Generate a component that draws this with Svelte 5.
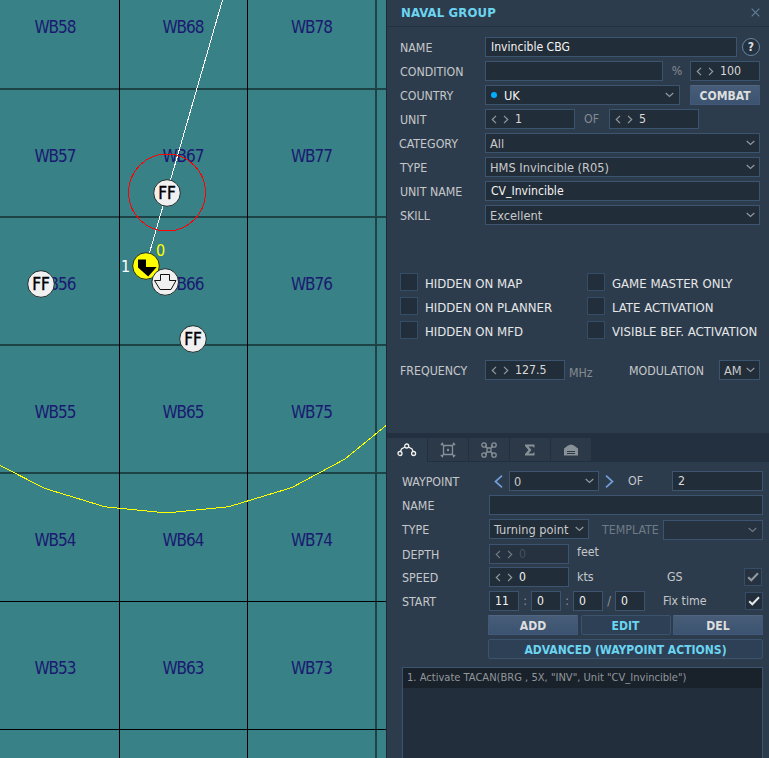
<script>
  const cols = [
    { id: 5, x: 55.5 },
    { id: 6, x: 183.5 },
    { id: 7, x: 312 }
  ];
  const rows = [
    { id: 8, y: 33 }, { id: 7, y: 161.500 }, { id: 6, y: 289.500 },
    { id: 5, y: 417.500 }, { id: 4, y: 546 }, { id: 3, y: 674 }
  ];
  const friendly = [{ x: 167, y: 193 }, { x: 41, y: 284 }, { x: 193, y: 339 }];
  const flags = [
    ['HIDDEN ON MAP', 'GAME MASTER ONLY'],
    ['HIDDEN ON PLANNER', 'LATE ACTIVATION'],
    ['HIDDEN ON MFD', 'VISIBLE BEF. ACTIVATION']
  ];
</script>

{#snippet down()}
  <svg class="down" width="9" height="6" viewBox="0 0 9 6"><path d="M.7 1 4.5 4.4 8.3 1" /></svg>
{/snippet}
{#snippet spin()}
  <svg class="spin" width="18" height="9" viewBox="0 0 18 9"><path d="M5 .8 1.3 4.5 5 8.2M13 .8l3.7 3.7L13 8.2" /></svg>
{/snippet}
{#snippet tick()}
  <svg width="12" height="10" viewBox="0 0 12 10"><path class="tick" d="M1.2 5.2 4.3 8.3 11 1.2" /></svg>
{/snippet}

<div class="app">
  <svg class="map" width="386" height="758" viewBox="0 0 386 758">
    <rect width="386" height="758" fill="#388187" />
    {#each cols as c}
      {#each rows as r}
        <text class="cell" x={c.x} y={r.y} textLength="42">WB{c.id}{r.id}</text>
      {/each}
    {/each}
    <g shape-rendering="crispEdges">
      <path d="M0 89H386M0 217H386M0 345H386M0 473H386M376 0V758" stroke="#1e4346" stroke-width="2" />
      <path d="M119.5 0V758M247.5 0V758M0 601.5H386M0 729.5H386" stroke="#000" />
      <path d="M222.5 0 148 258" stroke="#fff" />
      <path d="M0 465.500 45 488.500 105 506.800 166.500 513 228.500 506.800 292 487.500 345 459 386 425.500" fill="none" stroke="#ff0" />
      <circle cx="167" cy="192.500" r="38.500" fill="none" stroke="#f00" />
    </g>
    <circle cx="146" cy="266" r="13.300" fill="#ff0" stroke="#202b2c" />
    <path d="M138 259.500h8v7.500h10.700l-8.500 9.500-10.200-9z" fill="#000" />
    <circle cx="165.200" cy="282" r="13.300" fill="#f0f0f0" stroke="#202b2c" />
    <path d="M160.500 274.500h9v6h6.500l-5 9h-11l-5.500-9h6z" fill="none" stroke="#111" />
    {#each friendly as f}
      <circle cx={f.x} cy={f.y} r="13.300" fill="#f0f0f0" stroke="#202b2c" />
      <text class="ff" x={f.x} y={f.y + 5.500} textLength="17.500">FF</text>
    {/each}
    <text class="wp" x="125.500" y="271.500" fill="#fff">1</text>
    <text class="wp" x="160.500" y="256" fill="#ff0">0</text>
  </svg>

  <aside>
    <header><h1>NAVAL GROUP</h1>
      <svg width="9" height="9" viewBox="0 0 9 9"><path d="M.7.7 8.300 8.300M8.300.7.7 8.300" stroke="#607d98" stroke-width="1.200" /></svg>
    </header>

    <section class="group">
      <div class="row"><label>NAME</label><div class="box bright" style:width="252px">Invincible CBG</div><span class="help">?</span></div>
      <div class="row"><label>CONDITION</label><div class="box" style:width="178px"></div><span class="dim pct">%</span><div class="box num" style:width="70px">{@render spin()}100</div></div>
      <div class="row"><label>COUNTRY</label><div class="box bright uk" style:width="195px"><i class="dot"></i>UK{@render down()}</div><button class="solid combat">COMBAT</button></div>
      <div class="row"><label>UNIT</label><div class="box num" style:width="90px">{@render spin()}1</div><span class="dim of">OF</span><div class="box num" style:width="90px">{@render spin()}5</div></div>
      <div class="row"><label class="out">CATEGORY</label><div class="box sel">All{@render down()}</div></div>
      <div class="row"><label>TYPE</label><div class="box sel">HMS Invincible (R05){@render down()}</div></div>
      <div class="row"><label>UNIT NAME</label><div class="box bright" style:width="275px">CV_Invincible</div></div>
      <div class="row"><label>SKILL</label><div class="box sel">Excellent{@render down()}</div></div>
    </section>

    <section class="flags">
      {#each flags as pair}
        {#each pair as name}
          <div class="flag"><span class="check"></span><span class="flag-name">{name}</span></div>
        {/each}
      {/each}
    </section>

    <section class="radio row">
      <label>FREQUENCY</label><div class="box num" style:width="80px">{@render spin()}127.5</div>
      <span class="dim mhz">MHz</span><span class="mod">MODULATION</span>
      <div class="box sel am">AM{@render down()}</div>
    </section>

    <nav>
      <span class="tab on">
        <svg width="20" height="14" viewBox="0 0 20 14"><g><circle cx="3" cy="10.500" r="2" /><circle cx="9.700" cy="3" r="2" /><circle cx="16.600" cy="10.500" r="2" /><path d="M3.500 8.500 4.500 6 8 4M11.500 4 15 6 16 8.500" /></g></svg>
      </span>
      <span class="tab">
        <svg width="16" height="16" viewBox="0 0 16 16"><g><path d="M3.500 3.500H12.500V12.500H3.500zM1.500 1.500 4.500 4.500M14.500 1.500 11.500 4.500M1.500 14.500 4.500 11.500M14.500 14.500 11.500 11.500M.8 3 3 .8M13 .8 15.200 3M.8 13 3 15.200M13 15.200 15.200 13" /><circle cx="8" cy="8" r="1.200" fill="#899198" stroke="none" /></g></svg>
      </span>
      <span class="tab">
        <svg width="16" height="16" viewBox="0 0 16 16"><g><circle cx="3" cy="3" r="2.200" /><circle cx="13" cy="3" r="2.200" /><circle cx="3" cy="13" r="2.200" /><circle cx="13" cy="13" r="2.200" /><path d="M5 3V5L6 6H10L11 5V3M5 13V11L6 10H10L11 11V13M6 6V10M10 6V10" /></g></svg>
      </span>
      <span class="tab">
        <svg width="12" height="12" viewBox="0 0 12 12"><path fill="#899198" d="M1 .5H10.500V3.500H9.500L9 2.500H4.500L7.500 6 4.500 9.500H9L9.500 8.500H10.500V11.500H1V10L4.500 6 1 2z" /></svg>
      </span>
      <span class="tab">
        <svg width="16" height="12" viewBox="0 0 16 12"><path fill="#899198" d="M1 11.500V4.500L5 1.500 8 .5 11 1.500 15 4.500V11.500z" /><path d="M4 7.500H12M4 9.500H12" stroke="#2b3a49" /></svg>
      </span>
    </nav>

    <section class="way">
      <div class="row"><label>WAYPOINT</label><svg class="prev" width="9" height="13" viewBox="0 0 9 13"><path d="M8 .7 1.500 6.500 8 12.300" /></svg><div class="box sel" style:width="90px">0{@render down()}</div><svg class="next" width="9" height="13" viewBox="0 0 9 13"><path d="M1 .7 7.500 6.500 1 12.300" /></svg><span class="of2">OF</span><div class="box" style:width="91px">2</div></div>
      <div class="row"><label>NAME</label><div class="box" style:width="274px"></div></div>
      <div class="row"><label>TYPE</label><div class="box sel" style:width="100px">Turning point{@render down()}</div><span class="tpl">TEMPLATE</span><div class="box off low" style:width="100px">{@render down()}</div></div>
      <div class="row depth"><label>DEPTH</label><div class="box num off" style:width="80px">{@render spin()}0</div><span class="unit feet">feet</span></div>
      <div class="row speed"><label>SPEED</label><div class="box num bright" style:width="80px">{@render spin()}0</div><span class="unit">kts</span><span class="gs">GS</span><span class="check off small">{@render tick()}</span></div>
      <div class="row start"><label>START</label><div class="box bright t">11</div><b>:</b><div class="box bright t">0</div><b>:</b><div class="box bright t">0</div><b>/</b><div class="box bright t">0</div><span class="fix">Fix time</span><span class="check small lit">{@render tick()}</span></div>
      <div class="btns"><button class="solid">ADD</button><button class="line">EDIT</button><button class="solid">DEL</button></div>
      <div class="btns adv"><button class="line">ADVANCED (WAYPOINT ACTIONS)</button></div>
      <div class="list"><div class="item">1. Activate TACAN(BRG , 5X, "INV", Unit "CV_Invincible")</div></div>
    </section>
  </aside>
</div>

<style>
  :global(body) { overflow: hidden; }
  .app { display: flex; width: 769px; height: 758px; overflow: hidden; font: 12.300px "DejaVu Sans Condensed", "DejaVu Sans", sans-serif; font-stretch: condensed; color: #c5c8ca; }
  .app * { box-sizing: border-box; }
  .map { flex: none; display: block; }
  .map text { text-anchor: middle; font-stretch: condensed; }
  .cell { font-size: 17px; fill: #1a1a70; }
  .ff { font-size: 17px; fill: #000; stroke: #000; stroke-width: .4px; }
  .wp { font-size: 16px; }
  aside { width: 383px; height: 758px; flex: none; background: #2d3c4d; border-left: 1px solid #1c2938; white-space: nowrap; }
  header { height: 27px; border-bottom: 1px solid #233141; display: flex; align-items: center; justify-content: space-between; padding: 0 9px 2px 14px; }
  h1 { margin: 0; font-size: 13px; font-weight: bold; color: #6bd5f1; letter-spacing: .15px; }
  .row { display: flex; align-items: center; height: 20px; }
  label { width: 85px; flex: none; padding-top: 1px; }
  .group { padding: 10px 0 0 13px; display: flex; flex-direction: column; gap: 4px; }
  .group .out { margin-left: -1px; width: 86px; }
  .box { height: 20px; flex: none; display: flex; align-items: center; background: #222d3a; border: 1px solid #3c5470; padding: 0 5px; color: #d9d9d7; }
  .bright { color: #f4f4f2; font-size: 12.100px; }
  .uk { font-size: 12.700px; }
  .sel { padding: 0 4px; color: #c9cac9; font-size: 12.700px; }
  .group .sel { width: 275px; }
  .down { margin-left: auto; flex: none; }
  .down path, .spin path { fill: none; stroke: #929aa0; stroke-width: 1.200; }
  .spin { margin: 0 6px 0 0; flex: none; }
  .help { width: 18px; height: 18px; margin-left: 5px; border: 1px solid #6685a2; border-radius: 50%; display: grid; place-items: center; font-weight: bold; font-size: 12px; color: #ddd; background: #243140; }
  .dim { color: #858b90; }
  .pct { width: 27px; text-align: center; padding-left: 1px; }
  .dot { width: 6px; height: 6px; border-radius: 50%; background: #00adff; margin-right: 7px; }
  button { font: bold 12.050px "DejaVu Sans Condensed", "DejaVu Sans", sans-serif; font-stretch: condensed; height: 20px; padding: 1px 0 0; color: #dedede; }
  .solid { border: 1px solid #42597a; border-top-color: #506580; background: linear-gradient(#475c77, #3c5471); border-radius: 1px; }
  .line { border: 1px solid #3c536e; background: #2d4056; color: #6bd5f1; border-radius: 2px; }
  .combat { width: 70px; margin-left: 10px; }
  .of { width: 34px; padding-left: 9px; }
  .flags { padding: 48px 0 0 13px; display: grid; grid-template-columns: 187px 1fr; row-gap: 4px; }
  .flag { display: flex; height: 20px; align-items: center; }
  .check { width: 18px; height: 18px; flex: none; background: #222e3b; border: 1px solid #354d67; }
  .flag .check { margin-bottom: 2px; }
  .flag-name { margin-left: 7px; color: #e6e7e8; padding-top: 1px; font-size: 13.050px; }
  .radio { margin: 19px 0 53px 13px; }
  .mhz { margin: 5px 0 0 4px; width: 60px; }
  .mod { width: 90px; padding-top: 1px; }
  .am { width: 41px; }
  nav { height: 29px; padding-top: 5px; background: #223040; display: flex; gap: 1px; }
  .tab { width: 40px; height: 23px; background: #2b3949; display: grid; place-items: center; }
  .tab.on { height: 24px; background: #2d3c4d; }
  .tab g { fill: none; stroke: #899198; stroke-width: 1.300; }
  .tab.on g { stroke: #f2f2ee; }
  .way { padding: 9px 0 0 15px; display: flex; flex-direction: column; }
  .way .row { margin-bottom: 4px; }
  .way label { width: 87px; }
  .prev, .next { flex: none; }
  .prev path, .next path { fill: none; stroke: #6f9fd5; stroke-width: 1.700; }
  .prev { margin-left: 5px; margin-right: 6px; }
  .next { margin-left: 6px; }
  .of2 { width: 44px; margin-left: 14px; }
  .tpl { width: 61px; margin-left: 13px; color: #6e7b84; padding-top: 2px; }
  .low { position: relative; top: 1px; }
  .off { background: #26323f; color: #45515e; }
  .off .spin, .off .down { opacity: .7; }
  .way .depth { margin: 1px 0 3px; }
  .unit { width: 98px; padding-left: 8px; }
  .feet { padding-bottom: 4px; }
  .gs { width: 77px; }
  .small { display: grid; place-items: center; margin-top: -1px; }
  .tick { fill: none; stroke: #929aa0; stroke-width: 2; }
  .lit .tick { stroke: #e5e7e8; }
  .t { width: 30px; }
  .start b { width: 12px; text-align: center; font-weight: normal; color: #8e9498; }
  .fix { width: 82px; margin-left: 18px; }
  .btns { margin-left: 86px; width: 275px; display: grid; grid-template-columns: 90px 90px 90px; justify-content: space-between; margin-bottom: 4px; }
  .adv { display: block; }
  .adv button { width: 275px; }
  .list { width: 361px; height: 100px; margin-top: 4px; border: 1px solid #3c5470; background: #232e3c; }
  .item { height: 20px; line-height: 20px; padding-left: 4px; font-size: 11.070px; color: #92979a; background: #19212b; }
</style>
